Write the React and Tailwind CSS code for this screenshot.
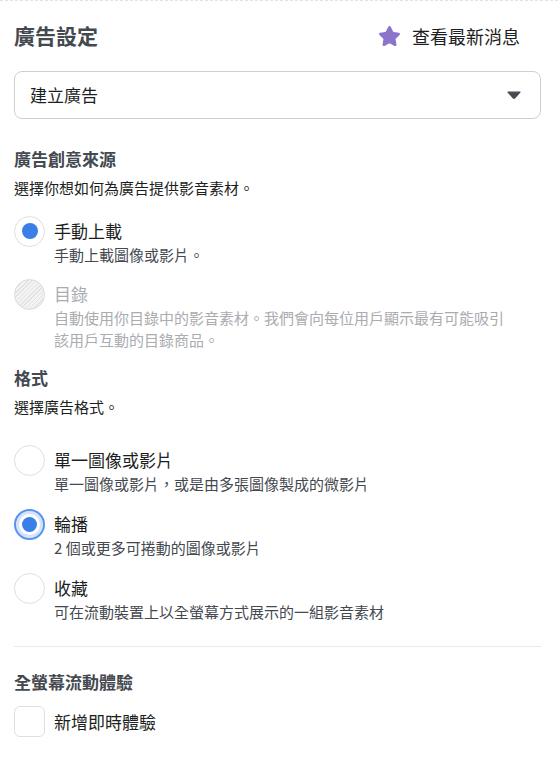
import { Star } from "lucide-react";

const font = { fontFamily: '"Noto Sans CJK TC", "Noto Sans", sans-serif' };

function Radio({ state }) {
  // state: "on" | "off" | "focus" | "disabled"
  if (state === "disabled") {
    return (
      <span className="w-[31px] h-[31px] shrink-0 rounded-full border border-[#dcdcdc] bg-[repeating-linear-gradient(135deg,#e3e3e3_0px,#e3e3e3_1px,#f3f3f3_1px,#f3f3f3_3px)]" />
    );
  }
  if (state === "focus") {
    return (
      <span className="w-[31px] h-[31px] shrink-0 rounded-full border-2 border-[#5a92ef] shadow-[inset_0_0_0_3px_#d6e4fb] bg-white flex items-center justify-center">
        <span className="w-[15px] h-[15px] rounded-full bg-[#3b7ee8]" />
      </span>
    );
  }
  return (
    <span className="w-[31px] h-[31px] shrink-0 rounded-full border border-[#dddfe2] bg-white flex items-center justify-center">
      {state === "on" && <span className="w-[16px] h-[16px] rounded-full bg-[#3b7ee8]" />}
    </span>
  );
}

function Option({ state, label, desc, className = "" }) {
  const disabled = state === "disabled";
  return (
    <div className={`flex gap-[9px] ${className}`}>
      <div className="h-[26px] flex items-center">
        <Radio state={state} />
      </div>
      <div className="flex flex-col">
        <div className={`text-[17px] leading-[26px] ${disabled ? "text-[#a9acb0]" : "text-[#1c1e21]"}`}>{label}</div>
        <div className={`text-[15px] leading-[22px] w-[452px] ${disabled ? "text-[#a9acb0]" : "text-[#444950]"}`}>{desc}</div>
      </div>
    </div>
  );
}

export default function App() {
  return (
    <div className="min-h-[782px] bg-white border-t border-dashed border-[#e2e2e2]" style={font}>
      <div className="px-[14px] w-[527px] box-content pb-10">
        {/* 標題列 */}
        <div className="mt-[17px] h-9 flex items-center justify-between">
          <h1 className="text-[21px] font-bold text-[#444950]">廣告設定</h1>
          <div className="flex items-center gap-[11px] mr-[21px]">
            <Star className="w-[23px] h-[23px] text-[#8c74cc]" fill="#8c74cc" strokeWidth={1.8} strokeLinejoin="round" />
            <span className="text-[18px] text-[#1c1e21]">查看最新消息</span>
          </div>
        </div>

        {/* 下拉選單 */}
        <div className="mt-[17px] h-[48px] w-[527px] border border-[#ccd0d5] rounded-lg flex items-center justify-between pl-[15px] pr-[19px]">
          <span className="text-[17px] text-[#1c1e21]">建立廣告</span>
          <svg width="14" height="8" viewBox="0 0 14 8">
            <path d="M1 1.2 L13 1.2 L7.6 7 Q7 7.6 6.4 7 Z" fill="#444950" stroke="#444950" strokeWidth="1.2" strokeLinejoin="round" />
          </svg>
        </div>

        {/* 廣告創意來源 */}
        <h2 className="mt-[28px] text-[17px] leading-[24px] font-bold text-[#444950]">廣告創意來源</h2>
        <p className="mt-[6px] text-[15px] leading-[22px] text-[#1c1e21]">選擇你想如何為廣告提供影音素材。</p>

        <Option className="mt-[19px]" state="on" label="手動上載" desc="手動上載圖像或影片。" />
        <Option
          className="mt-[15px]"
          state="disabled"
          label="目錄"
          desc="自動使用你目錄中的影音素材。我們會向每位用戶顯示最有可能吸引該用戶互動的目錄商品。"
        />

        {/* 格式 */}
        <h2 className="mt-[15px] text-[17px] leading-[24px] font-bold text-[#444950]">格式</h2>
        <p className="mt-[6px] text-[15px] leading-[22px] text-[#1c1e21]">選擇廣告格式。</p>

        <Option className="mt-[29px]" state="off" label="單一圖像或影片" desc="單一圖像或影片，或是由多張圖像製成的微影片" />
        <Option className="mt-[16px]" state="focus" label="輪播" desc="2 個或更多可捲動的圖像或影片" />
        <Option className="mt-[16px]" state="off" label="收藏" desc="可在流動裝置上以全螢幕方式展示的一組影音素材" />

        <div className="mt-[23px] h-px w-[527px] bg-[#e9eaec]" />

        {/* 全螢幕流動體驗 */}
        <h2 className="mt-[23px] text-[17px] leading-[24px] font-bold text-[#444950]">全螢幕流動體驗</h2>
        <label className="mt-[12px] flex items-center gap-[9px]">
          <span className="w-[31px] h-[31px] rounded-md border border-[#dddfe2] bg-white" />
          <span className="text-[17px] leading-[31px] text-[#1c1e21]">新增即時體驗</span>
        </label>
      </div>
    </div>
  );
}
